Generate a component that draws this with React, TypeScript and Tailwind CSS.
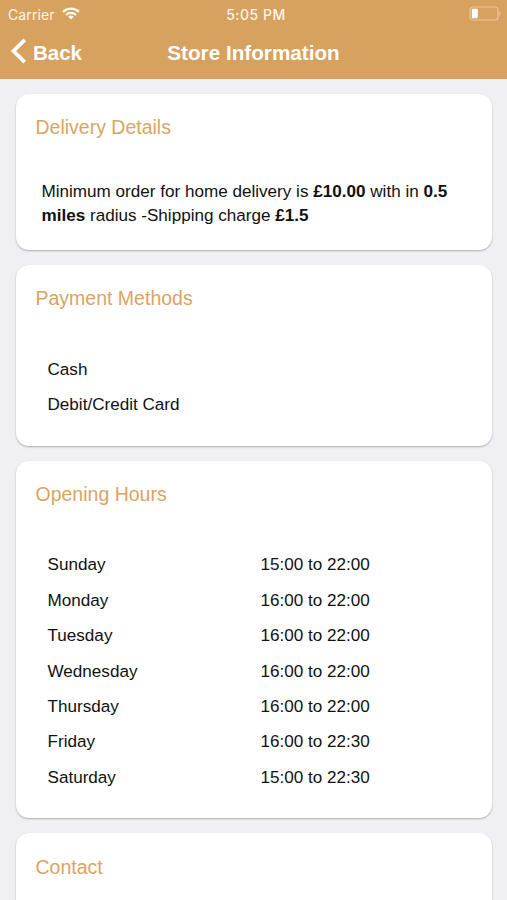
import React from 'react';

interface CardProps {
  title: string;
  className?: string;
  children?: React.ReactNode;
}

const openingHours = [
  { day: 'Sunday', time: '15:00 to 22:00' },
  { day: 'Monday', time: '16:00 to 22:00' },
  { day: 'Tuesday', time: '16:00 to 22:00' },
  { day: 'Wednesday', time: '16:00 to 22:00' },
  { day: 'Thursday', time: '16:00 to 22:00' },
  { day: 'Friday', time: '16:00 to 22:30' },
  { day: 'Saturday', time: '15:00 to 22:30' },
];

const paymentMethods = ['Cash', 'Debit/Credit Card'];

const Card: React.FC<CardProps> = ({ title, className = '', children }) => (
  <section
    className={`shrink-0 rounded-[13px] bg-white px-5 pt-[21px] shadow-[0_1px_2px_rgba(0,0,0,0.28)] ${className}`}
  >
    <h2 className="text-[19.5px] leading-6 text-[#dba463]">{title}</h2>
    {children}
  </section>
);

const StatusBar: React.FC = () => (
  <div className="grid h-7 grid-cols-3 items-center pl-2 pr-[6px] font-['Inter',sans-serif] text-[14px] text-[#fff6e8]">
    <div className="flex items-center gap-[7px]">
      <span className="tracking-[0.1px]">Carrier</span>
      <svg className="mb-[2px] h-[13px] w-[18px]" viewBox="0 0 18 13" fill="none" stroke="#fffaf0" strokeWidth="2.3">
        <path d="M1 4.9a11.4 11.4 0 0 1 16 0" />
        <path d="M4 8a7.1 7.1 0 0 1 10 0" />
        <path d="M9 12.6 6.2 9.8a4 4 0 0 1 5.6 0z" fill="#fffaf0" stroke="none" />
      </svg>
    </div>
    <span className="pl-[3px] text-center font-medium tracking-[0.5px]">5:05 PM</span>
    <svg className="mb-[2px] h-[15px] w-8 justify-self-end" viewBox="0 0 32 15" fill="none">
      <rect x="1" y="1" width="28" height="13" rx="3" stroke="#ecc697" strokeWidth="1.2" />
      <rect x="2.8" y="2.8" width="6" height="9.4" rx="0.8" fill="#fff" />
      <path d="M30.2 5.3c1.7.7 1.7 3.7 0 4.4z" fill="#ecc697" />
    </svg>
  </div>
);

const NavBar: React.FC = () => (
  <div className="grid h-[51px] grid-cols-[110px_1fr_110px] items-center px-[10px] pb-[1px] text-white">
    <button className="flex items-center gap-[6px] text-left text-[20.5px] font-bold leading-6">
      <svg className="mb-[4px] h-[26px] w-[17px]" viewBox="0 0 17 26" fill="none" stroke="currentColor" strokeWidth="3.8">
        <path d="M14.8 1.8 3.5 13l11.3 11.2" />
      </svg>
      Back
    </button>
    <h1 className="text-center text-[20.7px] font-bold leading-6">Store Information</h1>
  </div>
);

const App: React.FC = () => {
  return (
    <div className="flex h-[900px] w-full flex-col overflow-hidden bg-[#efeff4] font-['Liberation_Sans',Arial,sans-serif] text-[17.1px] text-[#111]">
      <header className="shrink-0 bg-[#d7a15f]">
        <StatusBar />
        <NavBar />
      </header>

      <main className="flex flex-col gap-[15px] px-[15.5px] pt-[15px]">
        <Card title="Delivery Details" className="h-[156px]">
          <p className="mt-[41px] pl-[6px] text-[17.1px] leading-[24px]">
            Minimum order for home delivery is <b>£10.00</b> with in <b>0.5 miles</b> radius -Shipping charge{' '}
            <b>£1.5</b>
          </p>
        </Card>

        <Card title="Payment Methods" className="h-[180.5px]">
          <ul className="mt-[42px] pl-3">
            {paymentMethods.map((method) => (
              <li key={method} className="flex h-[35.4px] items-center">
                {method}
              </li>
            ))}
          </ul>
        </Card>

        <Card title="Opening Hours" className="h-[357.5px]">
          <div className="mt-[42px] pl-3">
            {openingHours.map(({ day, time }) => (
              <div key={day} className="grid h-[35.4px] grid-cols-[213px_1fr] items-center">
                <span>{day}</span>
                <span>{time}</span>
              </div>
            ))}
          </div>
        </Card>

        <Card title="Contact" className="h-[180px] pt-[22px]" />
      </main>
    </div>
  );
};

export default App;
